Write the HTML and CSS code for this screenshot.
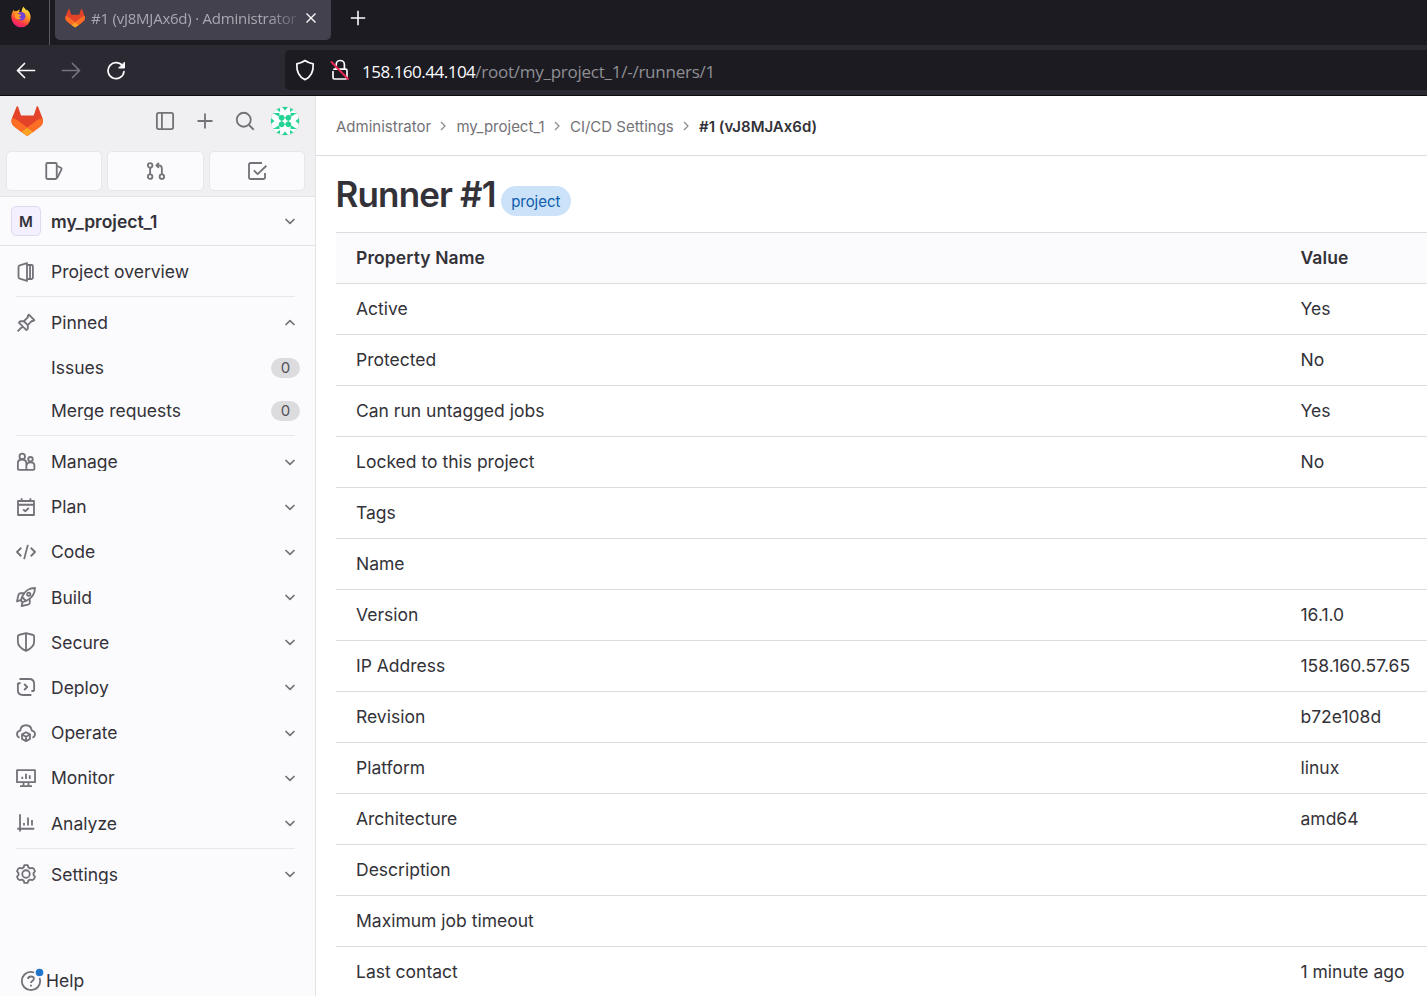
FILE: index.html
```html
<!DOCTYPE html>
<html lang="en">
<head>
<meta charset="utf-8">
<title>#1 (vJ8MJAx6d) · Administrator</title>
<link rel="stylesheet" href="styles.css">
</head>
<body>
<svg class="defs" width="0" height="0">
  <defs>
    <linearGradient id="ffBody" x1="0.75" y1="0" x2="0.3" y2="1"><stop offset="0" stop-color="#fff04a"/><stop offset=".4" stop-color="#ff9a1f"/><stop offset=".75" stop-color="#ff3647"/><stop offset="1" stop-color="#e31587"/></linearGradient>
    <symbol id="tanuki" viewBox="0 0 32 30">
      <path fill="#e24329" d="M31.4 11.9l-.1-.2L27 .6c-.2-.5-1-.6-1.3 0l-3 9H10L7 .6C6.700 0 6 0 5.700.6L1.100 11.800a8 8 0 0 0 2.700 9.300l12.400 9 12.400-9a8 8 0 0 0 2.800-9.200z"/>
      <path fill="#fc6d26" d="M31.4 11.900a14.400 14.400 0 0 0-5.800 2.600l-9.400 7.100 6 4.500 6.400-5a8 8 0 0 0 2.800-9.200zM1.100 11.900a14.400 14.400 0 0 1 5.800 2.600l9.300 7.100-6 4.500-6.400-5a8 8 0 0 1-2.700-9.200z"/>
      <path fill="#fca326" d="M10.200 26.100l6 4 6-4-6-4.500z"/>
    </symbol>
    <symbol id="down" viewBox="0 0 16 16"><path d="M3.500 6L8 10.300 12.500 6"/></symbol>
    <symbol id="right" viewBox="0 0 8 10"><path d="M2 1l4 4-4 4"/></symbol>
  </defs>
</svg>

<header class="browser">
  <div class="tabs">
    <div class="tab-home">
      <svg width="22" height="22" viewBox="0 0 22 22">
        <path fill="url(#ffBody)" d="M13.500.8c.8 1.500 2 2.200 2.900 3.800.2-.4.200-.8.100-1.200C19.300 5.300 20.800 8 20.600 11.600A9.600 9.600 0 0 1 1.400 11.800C1.200 8.800 2 6 3.900 3.500c0 .8.200 1.400.6 2 .8-.4 1.800-.5 2.600-.3C8 4.200 8.800 3.600 10 3.500c-.7.800-.9 1.600-.8 2.500h2.300c.2-2 .8-3.800 2-5.200z"/>
        <circle cx="11.300" cy="10.300" r="4.200" fill="#7542d8"/>
        <path fill="#ff9d24" d="M5 8.200c1.500-.9 3-.6 4.600.2.600.3 1.300.1 1.800.3-.3 1.100-1.600 1.300-2.200 1.900.2 1 1 1.700 2.200 1.700-1.500 1.600-5.300 1.300-6.400-1.300z"/>
      </svg>
    </div>
    <div class="tab">
      <svg width="20" height="20"><use href="#tanuki"/></svg>
      <span class="tab-title">#1 (vJ8MJAx6d) · Administrator</span>
      <svg class="tab-close" width="12" height="12" viewBox="0 0 12 12"><path d="M1.500 1.500l9 9m0-9l-9 9"/></svg>
    </div>
    <svg class="tab-new" width="16" height="16" viewBox="0 0 16 16"><path d="M8 .8v14.400M.8 8h14.400"/></svg>
  </div>
  <div class="toolbar">
    <svg class="tool" width="20" height="20" viewBox="0 0 20 20"><path d="M18.500 10.500H1.500M8.500 3.500l-7 7 7 7"/></svg>
    <svg class="tool dim" width="20" height="20" viewBox="0 0 20 20"><path d="M1.500 10.500h17M11.500 3.500l7 7-7 7"/></svg>
    <svg class="tool" width="20" height="20" viewBox="0 0 20 20"><path d="M16.900 6.500A8 8 0 1 0 18 11.500"/><path class="solid" d="M18.500 2.500v5.500h-5.500z"/></svg>
    <div class="urlbar">
      <svg class="tool" width="20" height="22" viewBox="0 0 20 22"><path d="M10 1.500c2.700 2 5.400 2.900 8.200 3.300C18.500 12 16.500 18 10 20.600 3.500 18 1.500 12 1.800 4.800 4.600 4.400 7.300 3.500 10 1.500z"/></svg>
      <svg class="tool lock" width="20" height="22" viewBox="0 0 20 22"><path d="M6.200 9V5.600a4.100 4.100 0 0 1 8.200 0V9M4 10.200h11.500q1.500 0 1.500 1.500v6.800q0 1.500-1.500 1.500H4.500Q3 20 3 18.500v-6"/><path class="slash" d="M1.500 3L18 20"/></svg>
      <span class="url"><b>158.160.44.104</b>/root/my_project_1/-/runners/1</span>
    </div>
  </div>
</header>

<div class="page">
  <aside class="sidebar">
    <div class="top">
      <div class="brand">
        <svg class="logo" width="32" height="30"><use href="#tanuki"/></svg>
        <svg class="ic" width="20" height="20" viewBox="0 0 16 16"><rect x="1.500" y="1.500" width="13" height="13" rx="1.500"/><path d="M5.500 1.500v13"/></svg>
        <svg class="ic" width="20" height="20" viewBox="0 0 16 16"><path d="M8 2v12M2 8h12"/></svg>
        <svg class="ic" width="20" height="20" viewBox="0 0 16 16"><circle cx="7" cy="7" r="5.600"/><path d="M11.200 11.200L15 15"/></svg>
        <svg class="avatar" width="30" height="30" viewBox="0 0 30 30">
          <circle cx="15" cy="15" r="14.500" fill="#fff" stroke="#dfe3e2"/>
          <g fill="#25d495">
            <path d="M12 1h6l-3 3.500zM12 29h6l-3-3.500zM1 12v6l3.500-3zM29 12v6l-3.500-3z"/>
            <path d="M6.500 3.500L10 2v4zM23.500 3.500L20 2v4zM6.500 26.500L10 28v-4zM23.500 26.500L20 28v-4z"/>
            <path d="M3 7h6.500v4zM27 7h-6.500v4zM3 23h6.500v-4zM27 23h-6.500v-4z"/>
            <path d="M11.700 8.500l3.200 3.200-3.200 3.200-3.200-3.200zM18.300 8.500l3.200 3.200-3.200 3.200-3.200-3.200zM11.700 15.100l3.200 3.200-3.200 3.200-3.200-3.200zM18.300 15.100l3.200 3.200-3.200 3.200-3.200-3.200z"/>
            <circle cx="11.700" cy="11.700" r="2.800"/><circle cx="18.300" cy="11.700" r="2.800"/><circle cx="11.700" cy="18.300" r="2.800"/><circle cx="18.300" cy="18.300" r="2.800"/>
          </g>
        </svg>
      </div>
      <div class="shortcuts">
        <span class="short"><svg class="ic" width="20" height="20" viewBox="0 0 16 16"><rect x="1.800" y="1.600" width="8.400" height="12.800" rx="1"/><path d="M10.500 4l3 1.400q.8.500.5 1.300l-3.500 7"/></svg></span>
        <span class="short"><svg class="ic" width="20" height="20" viewBox="0 0 16 16"><circle cx="3.300" cy="3.500" r="1.800"/><circle cx="3.300" cy="12.500" r="1.800"/><circle cx="12.700" cy="12.500" r="1.800"/><path d="M3.300 5.300v5.400M12.700 10.700V6q0-2.500-2.500-2.500H8.500M10.300 1.500l-2 2 2 2"/></svg></span>
        <span class="short"><svg class="ic" width="20" height="20" viewBox="0 0 16 16"><path d="M12 1.600H3q-1.400 0-1.400 1.400v10q0 1.400 1.400 1.400h10q1.400 0 1.400-1.400V9.500M5.500 7.500L8.500 10.500 15.500 3.800"/></svg></span>
      </div>
    </div>
    <div class="context">
      <span class="letter">M</span>
      <span class="project">my_project_1</span>
      <svg class="ic chev" width="16" height="16"><use href="#down"/></svg>
    </div>
    <nav class="nav">
      <div class="row"><svg class="ic" width="20" height="20" viewBox="0 0 16 16"><path d="M8.800.9L3 2.700q-1 .3-1 1.300v8q0 1 1 1.300l5.800 1.800zM9 2.400h3.500q1 0 1 1v9.200q0 1-1 1H9M11.200 2.400v11.200"/></svg><span class="label">Project overview</span></div>
      <hr>
      <div class="row"><svg class="ic" width="20" height="20" viewBox="0 0 16 16"><path d="M10.300 1.300l4.400 4.400-1 .8-1-.2-3.300 3.400.1 2.800-1.200 1.200-6-6 1.200-1.200 2.800.1 3.300-3.300-.2-1zM5.200 10.800L1.300 14.700M6.300 6.600l3.100 3.100"/></svg><span class="label">Pinned</span><svg class="ic chev up" width="16" height="16"><use href="#down"/></svg></div>
      <div class="subs">
        <div class="row sub"><span class="label">Issues</span><span class="count">0</span></div>
        <div class="row sub"><span class="label">Merge requests</span><span class="count">0</span></div>
      </div>
      <hr class="wide">
      <div class="row"><svg class="ic" width="20" height="20" viewBox="0 0 16 16"><circle cx="5" cy="3.500" r="2.200"/><circle cx="11.600" cy="5.800" r="1.800"/><path d="M8 14.300H2.500q-1 0-1-1V9q0-3 3.300-3T8.300 9v5.300h5.500q.9 0 .9-1v-2.500q0-2.500-3-2.500t-3.200 2.500"/></svg><span class="label">Manage</span><svg class="ic chev" width="16" height="16"><use href="#down"/></svg></div>
      <div class="row"><svg class="ic" width="20" height="20" viewBox="0 0 16 16"><path d="M1.600 3.200h12.800v11.200H1.600zM1.600 6.200h12.800M4.500 1v2M11.500 1v2M5.700 9.900l1.700 1.500 2.800-2.600"/></svg><span class="label">Plan</span><svg class="ic chev" width="16" height="16"><use href="#down"/></svg></div>
      <div class="row"><svg class="ic" width="20" height="20" viewBox="0 0 16 16"><path d="M4.200 4.600L.8 8l3.400 3.400M11.800 4.600L15.200 8l-3.400 3.400M9.500 2.300l-3 11.400"/></svg><span class="label">Code</span><svg class="ic chev" width="16" height="16"><use href="#down"/></svg></div>
      <div class="row"><svg class="ic" width="20" height="20" viewBox="0 0 16 16"><path d="M15.200.8C10.500.8 7.500 2.300 4.800 8L8 11.200C13.500 8.500 15.200 5.500 15.200.8zM6.300 5H3.500Q2.300 5 1.900 6.500L.8 11.500 4.800 10M11 9.700v2.800q0 1.200-1.500 1.600l-5 1.100.9-3.700M4.800 8l-1 2.800 1.400 1.400L8 11.200"/><circle cx="10.200" cy="5.800" r="1.300"/></svg><span class="label">Build</span><svg class="ic chev" width="16" height="16"><use href="#down"/></svg></div>
      <div class="row"><svg class="ic" width="20" height="20" viewBox="0 0 16 16"><path d="M8 .9l5.800 1.500q.7.200.7.900V7.500c0 3.500-2.500 5.800-6.500 7.600-4-1.800-6.500-4.100-6.500-7.600V3.300q0-.7.7-.9zM8 .9v14.200"/></svg><span class="label">Secure</span><svg class="ic chev" width="16" height="16"><use href="#down"/></svg></div>
      <div class="row"><svg class="ic" width="20" height="20" viewBox="0 0 16 16"><path d="M2.800 1.600H10.500q4 0 4 4v5.600M1.500 4.800v5.600q0 4 4 4h6.800M1.500 5h2.200M12.300 11.200h2.200M6.500 5.600L9 8l-2.500 2.400"/></svg><span class="label">Deploy</span><svg class="ic chev" width="16" height="16"><use href="#down"/></svg></div>
      <div class="row"><svg class="ic" width="20" height="20" viewBox="0 0 16 16"><path d="M2.800 11.800C1.500 11.200.8 10.300.8 9c0-1.700 1-2.700 2.600-2.900C3.700 3.300 5.500 1.800 8 1.800s4.300 1.500 4.600 4.300c1.600.2 2.600 1.200 2.600 2.900 0 1.300-.7 2.200-2 2.800M8 7.400l3.200 1.700v3.600L8 14.500l-3.200-1.800V9.100zM4.800 9.200L8 11l3.200-1.800M8 11v3.500"/></svg><span class="label">Operate</span><svg class="ic chev" width="16" height="16"><use href="#down"/></svg></div>
      <div class="row"><svg class="ic" width="20" height="20" viewBox="0 0 16 16"><path d="M.8 1.700h14.400v9.600H.8zM6 11.500v2.700M10 11.500v2.700M3.200 14.500h9.600M5 7v1.800M8 4.500v4.300M11 5.700v3.100"/></svg><span class="label">Monitor</span><svg class="ic chev" width="16" height="16"><use href="#down"/></svg></div>
      <div class="row"><svg class="ic" width="20" height="20" viewBox="0 0 16 16"><path d="M3.200 1v13.800M1 12.600h13.600M6.400 8v2M9.600 3.600V10M12.800 5.600V10"/></svg><span class="label">Analyze</span><svg class="ic chev" width="16" height="16"><use href="#down"/></svg></div>
      <hr>
      <div class="row"><svg class="ic" width="20" height="20" viewBox="0 0 16 16"><path d="M6.700.9h2.600l.6 1.800 1.300.8 1.900-.4 1.300.9.800 1.800-1.200 1.500v1.400l1.200 1.500-.8 1.800-1.300.9-1.900-.4-1.300.8-.6 1.800H6.700l-.6-1.800-1.300-.8-1.900.4-1.300-.9-.8-1.800L2 8.700V7.300L.8 5.800 1.600 4l1.300-.9 1.900.4 1.300-.8z"/><circle cx="8" cy="8" r="3"/></svg><span class="label">Settings</span><svg class="ic chev" width="16" height="16"><use href="#down"/></svg></div>
    </nav>
    <div class="help">
      <svg class="ic" width="24" height="24" viewBox="0 0 24 24"><circle cx="11" cy="13" r="9.200"/><path d="M8 11q.2-2.500 3-2.500t3 2.300c0 1.800-3 2-3 4.200M11 16.800v1.600"/><circle class="halo" cx="19.500" cy="4.500" r="5.500"/><circle class="dot" cx="19.500" cy="4.500" r="3.800"/></svg>
      <span>Help</span>
    </div>
  </aside>

  <main class="main">
    <div class="crumbs">
      <span>Administrator</span><svg class="sep" width="8" height="10"><use href="#right"/></svg>
      <span>my_project_1</span><svg class="sep" width="8" height="10"><use href="#right"/></svg>
      <span>CI/CD Settings</span><svg class="sep" width="8" height="10"><use href="#right"/></svg>
      <b>#1 (vJ8MJAx6d)</b>
    </div>
    <div class="content">
      <div class="title"><h1>Runner #1</h1><span class="badge">project</span></div>
      <table>
        <thead><tr><th>Property Name</th><th class="val">Value</th></tr></thead>
        <tbody>
          <tr><td>Active</td><td>Yes</td></tr>
          <tr><td>Protected</td><td>No</td></tr>
          <tr><td>Can run untagged jobs</td><td>Yes</td></tr>
          <tr><td>Locked to this project</td><td>No</td></tr>
          <tr><td>Tags</td><td></td></tr>
          <tr><td>Name</td><td></td></tr>
          <tr><td>Version</td><td>16.1.0</td></tr>
          <tr><td>IP Address</td><td>158.160.57.65</td></tr>
          <tr><td>Revision</td><td>b72e108d</td></tr>
          <tr><td>Platform</td><td>linux</td></tr>
          <tr><td>Architecture</td><td>amd64</td></tr>
          <tr><td>Description</td><td></td></tr>
          <tr><td>Maximum job timeout</td><td></td></tr>
          <tr><td>Last contact</td><td>1 minute ago</td></tr>
        </tbody>
      </table>
    </div>
  </main>
</div>
</body>
</html>
```

FILE: styles.css
```css
* { box-sizing: border-box; }
body { margin: 0; height: 996px; overflow: hidden; font-family: Inter, sans-serif; font-size: 17.5px; color: #333238; background: #fff; display: flex; flex-direction: column; }
.defs { position: absolute; }
svg { display: block; flex: none; }

.browser { flex: none; height: 96px; background: #2b2a33; border-bottom: 1px solid #0c0c0d; font-family: "Open Sans", sans-serif; }
.tabs { height: 45px; background: #1c1b22; display: flex; }
.tab-home { width: 50px; border-right: 1px solid #5a5963; padding: 6px 0 0 10px; }
.tab { width: 276px; height: 40px; margin-left: 5px; padding: 0 14px 4px 10px; background: #42414d; border-radius: 0 0 5px 5px; display: flex; align-items: center; }
.tab-title { width: 206px; margin-left: 6px; font-size: 15px; white-space: nowrap; overflow: hidden; color: #a9a8b0; letter-spacing: -.23px; -webkit-mask-image: linear-gradient(90deg, #000 86%, transparent 104%); mask-image: linear-gradient(90deg, #000 86%, transparent 104%); }
.tab-close { margin-left: 7.500px; fill: none; stroke: #fbfbfe; stroke-width: 1.4; }
.tab-new { margin: 10px 0 0 18.500px; fill: none; stroke: #fbfbfe; stroke-width: 1.6; }
.toolbar { height: 50px; display: flex; align-items: center; padding-left: 16px; gap: 25px; }
.tool { fill: none; stroke: #fbfbfe; stroke-width: 1.7; stroke-linecap: round; stroke-linejoin: round; }
.tool .solid { fill: #fbfbfe; stroke-width: 1; }
.tool .slash { stroke: #e22850; stroke-width: 2; }
.dim { stroke: #75747c; }
.urlbar { flex: 1; height: 40px; margin-left: 134px; padding-left: 10px; background: #1c1b22; border-radius: 5px 0 0 5px; display: flex; align-items: center; }
.lock { margin-left: 15px; }
.url { margin-left: 12px; font-size: 17px; letter-spacing: -.25px; color: #8f8f94; white-space: nowrap; padding-top: 2px; }
.url b { font-weight: 400; color: #fbfbfe; letter-spacing: -.5px; }

.page { flex: 1; display: flex; min-height: 0; }
.sidebar { width: 316px; flex: none; border-right: 1px solid #e3e3e6; background: #fbfafd; display: flex; flex-direction: column; }
.ic { fill: none; stroke: #737278; stroke-width: 1.45; stroke-linejoin: round; }
.top { height: 101px; background: #f0f0f2; border-bottom: 1px solid #e4e4e8; }
.brand { height: 50px; padding: 0 15px 0 10.500px; display: flex; align-items: center; gap: 20px; }
.logo { margin-right: auto; }
.avatar { margin-left: -5px; }
.shortcuts { display: grid; grid-template-columns: 96px 97px 96px; gap: 5px; padding: 5px 10px 0 6px; }
.short { height: 40px; background: #fbfafd; border: 1px solid #e7e6ea; border-radius: 5px; display: flex; align-items: center; justify-content: center; }
.context { height: 49px; border-bottom: 1px solid #e3e3e6; padding: 0 17px 0 11px; display: flex; align-items: center; }
.letter { width: 30px; height: 30px; border: 1px solid #dfdaed; border-radius: 5px; background: #f4f0ff; font-size: 15px; font-weight: 600; line-height: 29px; text-align: center; }
.project { margin-left: 10px; font-weight: 600; }
.chev { margin-left: auto; stroke-width: 1.7; }
.up { transform: rotate(180deg); }
.nav { padding: 3px 17px 0 16px; }
.row { height: 45.2px; display: flex; align-items: center; }
.label { margin-left: 15px; line-height: 19px; overflow: hidden; white-space: nowrap; }
.subs { padding-top: 1px; }
.sub { height: 43px; padding-left: 20px; }
.count { width: 29px; height: 20px; margin: 0 -2px 0 auto; border-radius: 10px; background: #dcdcde; font-size: 15px; line-height: 20px; text-align: center; color: #535158; }
.nav hr { height: 1px; border: 0; margin: 2px 3px 3px 0; background: #e7e7ea; }
.nav hr.wide { margin: 2.400px 3px 3.200px 0; }
.help { margin-top: auto; padding: 0 0 4px 20px; display: flex; align-items: center; gap: 2px; }
.help .ic { stroke-width: 1.8; }
.help .halo { fill: #fbfafd; stroke: none; }
.help .dot { fill: #1f75cb; stroke: none; }

.main { flex: 1; min-width: 0; overflow: hidden; }
.crumbs { height: 60px; padding: 2px 0 0 20px; border-bottom: 1px solid #dcdcde; display: flex; align-items: center; font-size: 15px; color: #737278; white-space: nowrap; }
.crumbs b { font-weight: 600; color: #333238; }
.sep { margin: 0 9.300px 2px 8px; fill: none; stroke: #89888d; stroke-width: 1.2; }
.content { padding-left: 20px; }
.title { height: 76px; display: flex; }
h1 { margin: 16px 0 0 -.5px; font-size: 35px; font-weight: 600; line-height: 44px; letter-spacing: -.85px; white-space: nowrap; }
.badge { height: 30px; margin: 30px 0 0 5px; padding: 0 10.500px; border-radius: 15px; background: #cbe2f9; color: #0b5cad; font-size: 15px; line-height: 31px; letter-spacing: -.05px; }
table { width: 100%; border-collapse: separate; border-spacing: 0; table-layout: fixed; }
th, td { height: 51px; padding: 0 0 2px 20px; border-top: 1px solid #dcdcde; text-align: left; vertical-align: middle; font-weight: 400; white-space: nowrap; }
th { background: #fbfafd; font-weight: 600; letter-spacing: .1px; }
.val { width: 146.500px; }
```
